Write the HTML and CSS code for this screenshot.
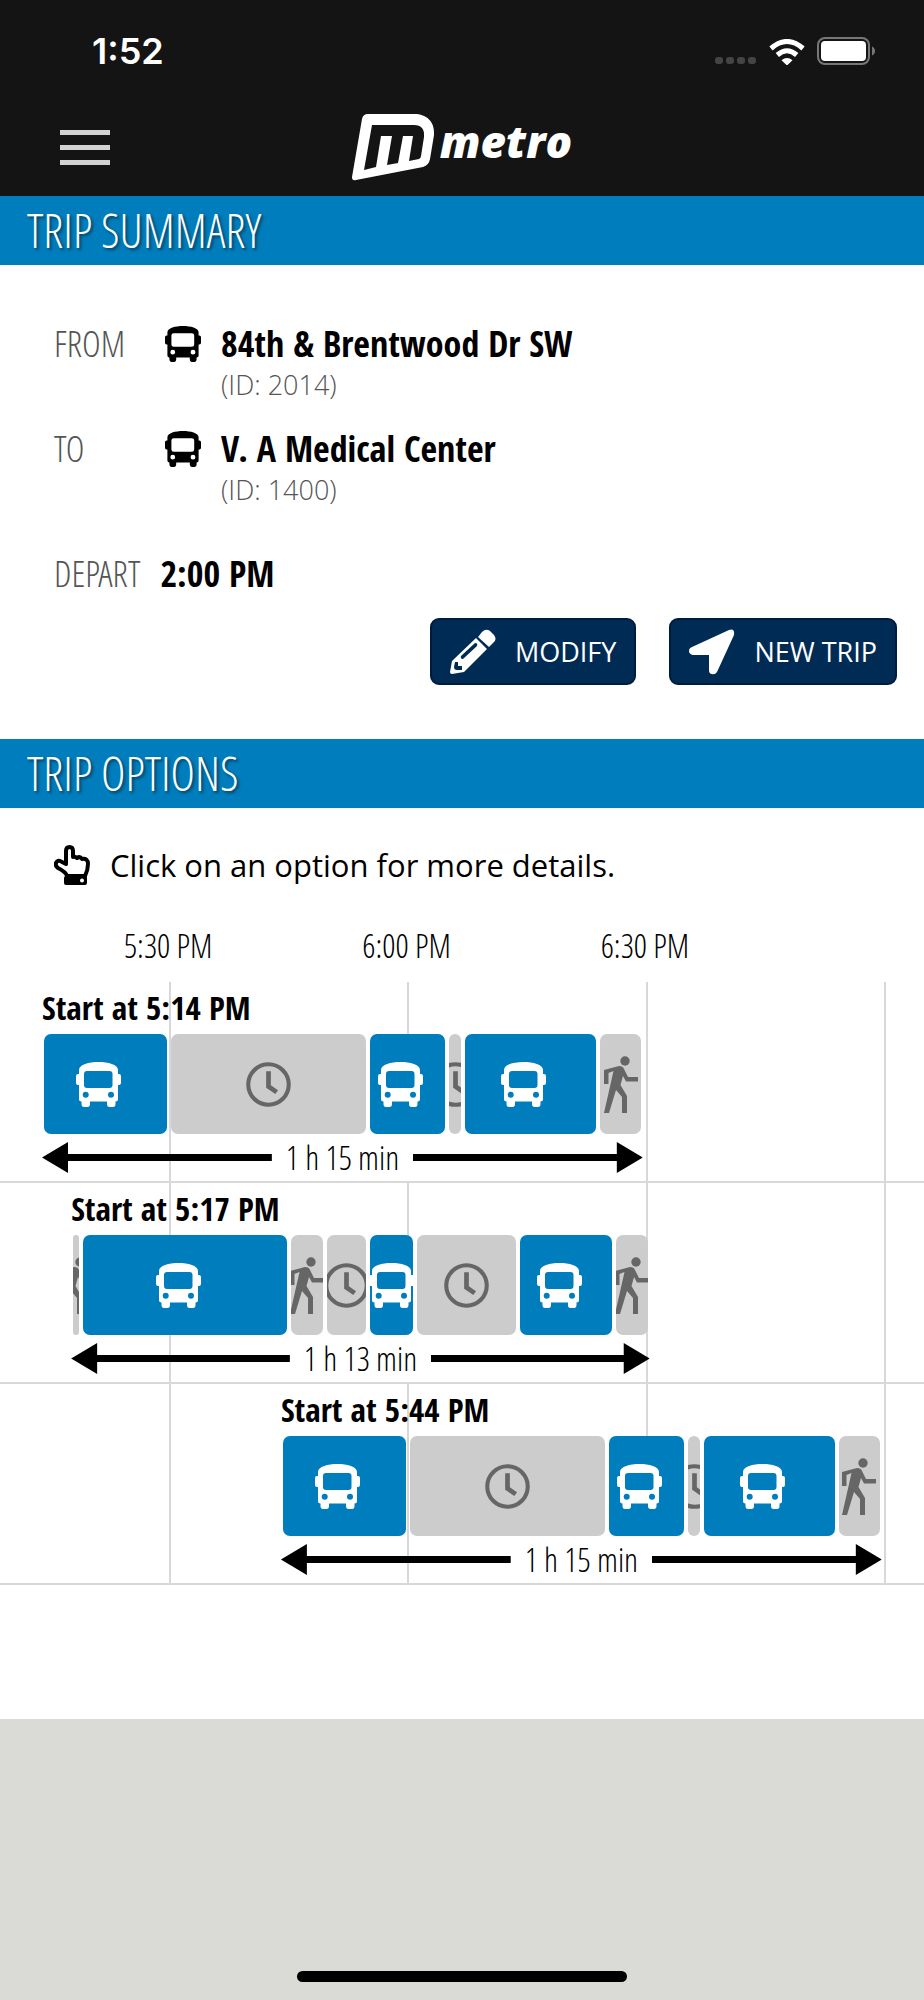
FILE: index.html
```html
<!DOCTYPE html>
<html lang="en">
<head>
    <meta charset="UTF-8">
    <meta name="viewport" content="width=device-width, initial-scale=1.0">
    <title>Metro Trip Planner</title>
    <link rel="stylesheet" href="styles.css">
</head>
<body>

    <!-- Shared icons -->
    <svg class="sprite" aria-hidden="true">
        <symbol id="bus" viewBox="0 0 45 45">
            <path fill="currentColor" fill-rule="evenodd" d="M22.500 0C32 0 42 2.500 42 8V12H43Q45 12 45 14V21Q45 23 43 23H42V37Q42 39.500 39.500 39.500V42Q39.500 45 37 45H33.500Q31 45 31 42V39.500H14V42Q14 45 11.500 45H8Q5.500 45 5.500 42V39.500Q3 39.500 3 37V23H2Q0 23 0 21V14Q0 12 2 12H3V8C3 2.500 13 0 22.500 0ZM11 9Q8 9 8 12V23Q8 26 11 26H33.500Q36.500 26 36.500 23V12Q36.500 9 33.500 9ZM9.700 29.700A3 3 0 1 0 9.700 35.700A3 3 0 1 0 9.700 29.700ZM35 29.700A3 3 0 1 0 35 35.700A3 3 0 1 0 35 29.700Z"/>
        </symbol>
        <symbol id="clock" viewBox="0 0 44 44">
            <circle cx="22" cy="22" r="19.800" fill="none" stroke="currentColor" stroke-width="4"/>
            <path d="M22 9V24L30 29.500" fill="none" stroke="currentColor" stroke-width="4.600"/>
        </symbol>
        <symbol id="walk" viewBox="0 0 34 57">
            <circle cx="21" cy="5" r="4.700" fill="currentColor"/>
            <path fill="currentColor" d="M0 14L15 10Q19 10 20 13L24 21H34V25.500H22L19 20L16.500 29L23 40V57H18V41L12 34L5 57H0L9.500 15L4.500 17V28H0Z"/>
        </symbol>
    </svg>

    <header class="topbar">
        <div class="status">
            <span class="clock">1:52</span>
            <div class="status-icons">
                <svg width="42" height="8" viewBox="0 0 42 8" fill="#444"><rect width="8" height="7" rx="3"/><rect x="11" width="8" height="7" rx="3"/><rect x="22" width="8" height="7" rx="3"/><rect x="33" width="8" height="7" rx="3"/></svg>
                <svg width="36" height="26" viewBox="0 0 36 26" fill="none" stroke="#fff" stroke-width="5">
                    <path d="M2 9.500Q18 -4.500 34 9.500"/>
                    <path d="M8.300 16Q18 7.500 27.700 16"/>
                    <path d="M12.500 21.300Q18 16.500 23.500 21.300L18 26.500Z" fill="#fff" stroke="none"/>
                </svg>
                <svg width="59" height="28" viewBox="0 0 59 28">
                    <rect x="1" y="1" width="51" height="26" rx="7" fill="none" stroke="#777" stroke-width="2"/>
                    <rect x="4" y="4" width="45" height="20" rx="4" fill="#fff"/>
                    <path d="M55 9.500Q58 11 58 14Q58 17 55 18.500Z" fill="#777"/>
                </svg>
            </div>
        </div>
        <nav class="nav">
            <button type="button" class="menu" aria-label="Menu"><span></span><span></span><span></span></button>
            <a href="#" class="logo">
                <svg width="84" height="67" viewBox="0 0 84 67" aria-hidden="true">
                    <path fill="#fff" fill-rule="evenodd" d="M10 5Q11 0 16 0H62C75 0 83 8 82 21L78 45Q77 51 71 53L4 66Q0 67 0 63ZM20 11L12 56L24 53L29 22H40L35 51L46 49L51 22H61L57 47L67 45Q69 44 69 42L72 23Q73 11 62 11Z"/>
                </svg>
                <span>metro</span>
            </a>
        </nav>
    </header>

    <main>
        <h1 class="heading">TRIP SUMMARY</h1>
        <section class="summary">
            <div class="place">
                <span class="label">FROM</span>
                <svg width="36" height="36"><use href="#bus"/></svg>
                <strong>84th &amp; Brentwood Dr SW</strong>
                <span class="stop-id">(ID: 2014)</span>
            </div>
            <div class="place">
                <span class="label">TO</span>
                <svg width="36" height="36"><use href="#bus"/></svg>
                <strong>V. A Medical Center</strong>
                <span class="stop-id">(ID: 1400)</span>
            </div>
            <div class="depart">
                <span class="label">DEPART</span>
                <strong>2:00 PM</strong>
            </div>
            <div class="actions">
                <button type="button" class="btn">
                    <svg width="46" height="46" viewBox="0 0 46 46" fill="#fff">
                        <path d="M28 8L32 3Q36 -1 40 2L44 6Q47 10 44 13L39 18Z"/>
                        <path fill-rule="evenodd" d="M26 9L37 20L14 43L2 45Q0 45 0 43L2 32ZM25 14L11 27Q10 30 13 30L27 17Q28 14 25 14ZM5 33L4 38Q4 41 7 41L12 41V37H8V33Z"/>
                    </svg>
                    MODIFY
                </button>
                <button type="button" class="btn">
                    <svg width="46" height="46" viewBox="0 0 46 46" fill="#fff">
                        <path d="M3 18L40 1Q46 -1 45 6L28 43Q26 46 23 45Q20 45 20 41V26H4Q0 25 0 22Q0 19 3 18Z"/>
                    </svg>
                    NEW TRIP
                </button>
            </div>
        </section>

        <h2 class="heading">TRIP OPTIONS</h2>
        <section class="options">
            <p class="hint">
                <svg width="36" height="41" viewBox="0 0 36 41">
                    <path d="M12 17V6Q12 2 15.500 2Q19 2 19 6V12Q21 11 23 13Q26 11 28 14Q34 13 34 19Q34 25 31 31H13Q12 27 4 23Q1 21 2 18Q4 14 8 17L12 19Z" fill="none" stroke="#000" stroke-width="4" stroke-linejoin="round"/>
                    <path fill-rule="evenodd" d="M12 31H31Q33 31 33 33V38Q33 40 31 40H12Q10 40 10 38V33Q10 31 12 31ZM28 33.500A2 2 0 1 0 28 37.500A2 2 0 1 0 28 33.500Z"/>
                </svg>
                Click on an option for more details.
            </p>

            <div class="times">
                <span>5:30 PM</span>
                <span>6:00 PM</span>
                <span>6:30 PM</span>
            </div>

            <div class="chart">
                <div class="row">
                    <a href="#" class="trip" style="margin-left: 4.55%; width: 65.05%">
                        <strong>Start at 5:14 PM</strong>
                        <div class="legs">
                            <div class="leg ride" style="flex-grow: 123"><svg><use href="#bus"/></svg></div>
                            <div class="leg" style="flex-grow: 194"><svg><use href="#clock"/></svg></div>
                            <div class="leg ride" style="flex-grow: 75"><svg><use href="#bus"/></svg></div>
                            <div class="leg" style="flex-grow: 12"><svg><use href="#clock"/></svg></div>
                            <div class="leg ride" style="flex-grow: 130"><svg><use href="#bus"/></svg></div>
                            <div class="leg" style="flex-grow: 41"><svg class="walk"><use href="#walk"/></svg></div>
                        </div>
                        <div class="duration"><span>1 h 15 min</span></div>
                    </a>
                </div>
                <div class="row">
                    <a href="#" class="trip" style="margin-left: 7.7%; width: 62.65%">
                        <strong>Start at 5:17 PM</strong>
                        <div class="legs">
                            <div class="leg" style="flex-grow: 6"><svg class="walk"><use href="#walk"/></svg></div>
                            <div class="leg ride" style="flex-grow: 203"><svg><use href="#bus"/></svg></div>
                            <div class="leg" style="flex-grow: 32"><svg class="walk"><use href="#walk"/></svg></div>
                            <div class="leg" style="flex-grow: 38"><svg><use href="#clock"/></svg></div>
                            <div class="leg ride short" style="flex-grow: 43"><svg><use href="#bus"/></svg></div>
                            <div class="leg" style="flex-grow: 99"><svg><use href="#clock"/></svg></div>
                            <div class="leg ride" style="flex-grow: 91"><svg><use href="#bus"/></svg></div>
                            <div class="leg" style="flex-grow: 32"><svg class="walk"><use href="#walk"/></svg></div>
                        </div>
                        <div class="duration"><span>1 h 13 min</span></div>
                    </a>
                </div>
                <div class="row">
                    <a href="#" class="trip" style="margin-left: 30.4%; width: 65.05%">
                        <strong>Start at 5:44 PM</strong>
                        <div class="legs">
                            <div class="leg ride" style="flex-grow: 123"><svg><use href="#bus"/></svg></div>
                            <div class="leg" style="flex-grow: 194"><svg><use href="#clock"/></svg></div>
                            <div class="leg ride" style="flex-grow: 75"><svg><use href="#bus"/></svg></div>
                            <div class="leg" style="flex-grow: 12"><svg><use href="#clock"/></svg></div>
                            <div class="leg ride" style="flex-grow: 130"><svg><use href="#bus"/></svg></div>
                            <div class="leg" style="flex-grow: 41"><svg class="walk"><use href="#walk"/></svg></div>
                        </div>
                        <div class="duration"><span>1 h 15 min</span></div>
                    </a>
                </div>
            </div>
        </section>
    </main>

    <footer class="footer"><div class="home-bar"></div></footer>

</body>
</html>
```
FILE: styles.css
```css
* {
    box-sizing: border-box;
}

body {
    margin: 0;
    min-height: 100vh;
    display: flex;
    flex-direction: column;
    background-color: #dadbd6;
    color: #000;
    font-family: "Open Sans", sans-serif;
}

svg {
    flex-shrink: 0;
}

.sprite {
    display: none;
}

/* Header */
.topbar {
    padding-bottom: 15px;
    background-color: #141414;
    color: #fff;
}

.status {
    display: flex;
    justify-content: space-between;
    align-items: center;
    padding: 32px 48px 0 92px;
}

.clock {
    font-family: Inter, sans-serif;
    font-size: 36px;
    line-height: 38px;
    font-weight: 600;
}

.status-icons {
    display: flex;
    align-items: flex-end;
    gap: 12px;
}

.nav {
    display: grid;
    grid-template-columns: 1fr auto 1fr;
    align-items: center;
    padding: 44px 60px 0;
}

.menu {
    display: flex;
    flex-direction: column;
    justify-self: start;
    gap: 10px;
    padding: 0;
    border: none;
    background: none;
}

.menu span {
    width: 50px;
    height: 5px;
    background-color: #d2d2d2;
}

.logo {
    display: flex;
    gap: 4px;
    color: #fff;
    text-decoration: none;
    font-size: 44px;
    line-height: 54px;
    font-weight: 800;
    font-style: italic;
}

/* Section headings */
.heading {
    margin: 0;
    padding: 0 27px;
    background-color: #007dbc;
    color: #fff;
    font-family: "Open Sans Condensed Light", "Open Sans Condensed", "Open Sans", sans-serif;
    font-size: 47px;
    line-height: 69px;
    font-weight: 300;
    text-shadow: 2px 2px 3px rgba(0, 0, 0, 0.5);
}

/* Trip summary */
.summary {
    padding: 54px 27px;
    background-color: #fff;
}

.label, .times, .duration {
    font-family: "Open Sans Condensed Light", "Open Sans Condensed", "Open Sans", sans-serif;
    font-size: 36px;
    line-height: 50px;
    font-weight: 300;
}

.place strong, .depart strong, .trip strong {
    font-family: "Open Sans Condensed", "Open Sans", sans-serif;
    font-size: 36px;
    line-height: 50px;
}

.label {
    color: #555;
}

.place {
    display: grid;
    grid-template-columns: 91px 36px 1fr;
    grid-template-rows: 50px 32px;
    column-gap: 20px;
    align-items: center;
    height: 105px;
    padding-left: 27px;
}

.place .stop-id {
    grid-column: 3;
    color: #555;
    font-size: 27px;
    line-height: 32px;
    font-weight: 300;
}

.depart {
    display: flex;
    gap: 20px;
    padding: 20px 27px 19px;
}

.actions {
    display: flex;
    justify-content: flex-end;
    gap: 33px;
}

.btn {
    display: flex;
    align-items: center;
    gap: 19px;
    height: 67px;
    padding: 0 18px;
    border: 2px solid #001c3d;
    border-radius: 9px;
    background-color: #002b55;
    color: #fff;
    font-family: "Open Sans", sans-serif;
    font-size: 27px;
}

/* Trip options */
.options {
    padding: 32px 0 134px;
    background-color: #fff;
}

.hint {
    display: flex;
    align-items: center;
    gap: 20px;
    margin: 0 54px;
    font-size: 31px;
    line-height: 50px;
}

.times {
    display: flex;
    padding: 31px 0 11px 49px;
    font-size: 33px;
}

.times span {
    width: 25.8vw;
    text-align: center;
}

.chart {
    background: repeating-linear-gradient(to right, #d8d8d8 0 2px, transparent 2px 25.8%) 169px 0 no-repeat;
}

.row {
    height: 201px;
    border-bottom: 2px solid #d8d8d8;
}

.trip {
    display: block;
    color: #000;
    text-decoration: none;
}

.trip strong {
    display: block;
    font-size: 33px;
    line-height: 52px;
    white-space: nowrap;
}

.legs {
    display: flex;
    gap: 4px;
    height: 100px;
    padding: 0 2px;
}

.leg {
    display: flex;
    flex-basis: 0;
    align-items: center;
    justify-content: center;
    min-width: 0;
    overflow: hidden;
    border-radius: 7px;
    background-color: #ccc;
    color: #666;
}

.ride {
    background-color: #007dbc;
    color: #fff;
}

.leg svg {
    width: 45px;
    height: 45px;
}

.ride svg {
    margin-right: 14px;
}

.short svg {
    margin-right: 0;
}

.leg .walk {
    width: 34px;
    height: 57px;
}

/* Arrow with the travel time in the middle */
.duration {
    display: flex;
    align-items: center;
    height: 47px;
    font-size: 33px;
}

.duration span {
    padding: 0 14px;
    background-color: #fff;
    line-height: 47px;
}

.duration::before, .duration::after {
    content: "";
    flex: 1;
    height: 31px;
    background-color: #000;
    clip-path: polygon(0 50%, 26px 0, 26px 12px, 100% 12px, 100% 19px, 26px 19px, 26px 100%);
}

.duration::after {
    transform: scaleX(-1);
}

/* Home indicator */
.footer {
    flex: 1;
    display: flex;
    align-items: flex-end;
    justify-content: center;
    padding-bottom: 18px;
}

.home-bar {
    width: 330px;
    height: 11px;
    border-radius: 6px;
    background-color: #000;
}
```
